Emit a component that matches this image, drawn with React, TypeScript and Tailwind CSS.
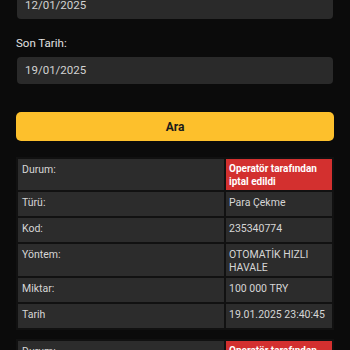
import React from "react";

type Row = { label: string; value: string; status?: boolean };

const rows: Row[] = [
  { label: "Durum:", value: "Operatör tarafından iptal edildi", status: true },
  { label: "Türü:", value: "Para Çekme" },
  { label: "Kod:", value: "235340774" },
  { label: "Yöntem:", value: "OTOMATİK HIZLI HAVALE" },
  { label: "Miktar:", value: "100 000 TRY" },
  { label: "Tarih", value: "19.01.2025 23:40:45" },
];

const rows2: Row[] = [
  { label: "Durum:", value: "Operatör tarafından iptal edildi", status: true },
  { label: "Türü:", value: "Para Çekme" },
];

function Table({ data }: { data: Row[] }) {
  return (
    <div className="grid grid-cols-[206px_106px] gap-[2px] bg-[#111111] p-[2px]">
      {data.map((r, i) => (
        <React.Fragment key={i}>
          <div className="min-h-[24px] bg-[#2c2c2c] px-[4px] pt-[4px] pb-[2px] text-[10.5px] leading-[13px] text-[#d6d6d6]">
            {r.label}
          </div>
          {r.status ? (
            <div className="min-h-[24px] bg-[#d3302f] px-[3px] pt-[4px] pb-[2px] text-[10px] font-bold leading-[12.5px] text-white">
              {r.value}
            </div>
          ) : (
            <div className="min-h-[24px] bg-[#2c2c2c] px-[3px] pt-[4px] pb-[2px] text-[10.5px] leading-[13px] text-[#d6d6d6]">
              {r.value}
            </div>
          )}
        </React.Fragment>
      ))}
    </div>
  );
}

export default function App() {
  return (
    <div className="h-[350px] w-[350px] overflow-hidden bg-[#0b0b0b] font-['Roboto',sans-serif]">
      <div className="-mt-[8px] flex flex-col px-4">
        <div className="mx-px flex h-[27px] items-center rounded-[4px] bg-[#2a2a2a] px-2 text-[11.5px] text-[#d2d2d2]">
          12/01/2025
        </div>
        <div className="mt-[16px] text-[11.5px] leading-[16px] text-[#e2e2e2]">Son Tarih:</div>
        <div className="mx-px mt-[6px] flex h-[27px] items-center rounded-[4px] bg-[#2a2a2a] px-2 text-[11.5px] text-[#d2d2d2]">
          19/01/2025
        </div>
        <button className="mt-[28px] flex h-[29px] items-center justify-center rounded-[5px] bg-[#fdc02c] text-[12px] font-bold text-[#1b1b1b]">
          Ara
        </button>
        <div className="mt-[16px]">
          <Table data={rows} />
        </div>
        <div className="mt-[9px]">
          <Table data={rows2} />
        </div>
      </div>
    </div>
  );
}
